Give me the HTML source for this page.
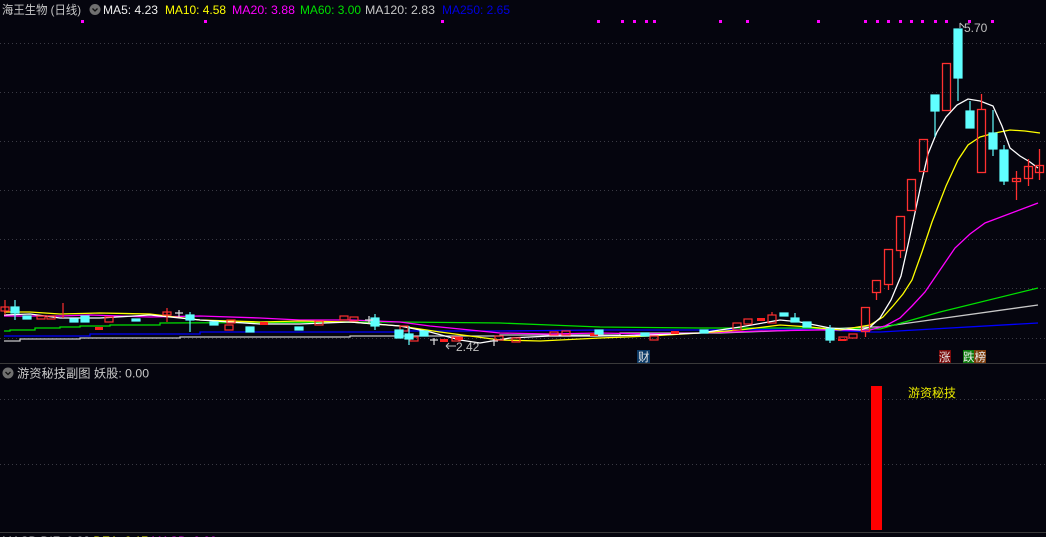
<!DOCTYPE html>
<html><head><meta charset="utf-8"><style>
html,body{margin:0;padding:0;background:#05050e;width:1046px;height:537px;overflow:hidden}
svg{display:block}
text{font-family:"Liberation Sans","Noto Sans CJK SC",sans-serif}
</style></head><body>
<svg width="1046" height="537" viewBox="0 0 1046 537" xmlns="http://www.w3.org/2000/svg">
<rect width="1046" height="537" fill="#05050e"/>
<g stroke="#3a3a44" stroke-width="1" stroke-dasharray="1,3">
<line x1="0" y1="43.5" x2="1046" y2="43.5"/><line x1="0" y1="92.5" x2="1046" y2="92.5"/>
<line x1="0" y1="141.5" x2="1046" y2="141.5"/><line x1="0" y1="190.5" x2="1046" y2="190.5"/>
<line x1="0" y1="239.5" x2="1046" y2="239.5"/><line x1="0" y1="288.5" x2="1046" y2="288.5"/>
<line x1="0" y1="338.5" x2="1046" y2="338.5"/>
<line x1="0" y1="399.5" x2="1046" y2="399.5"/><line x1="0" y1="464.5" x2="1046" y2="464.5"/>
</g>
<line x1="0" y1="363.5" x2="1046" y2="363.5" stroke="#3a3a3a"/>
<line x1="0" y1="532.5" x2="1046" y2="532.5" stroke="#3a3a3a"/>
<!-- header -->
<text x="2" y="14" font-size="12" fill="#c8c8c8" textLength="79" lengthAdjust="spacingAndGlyphs">海王生物 (日线)</text>
<circle cx="95" cy="9.5" r="5.5" fill="#707070"/><path d="M92.5 8.5l2.5 2.5 2.5-2.5" stroke="#111" stroke-width="1.3" fill="none"/>
<text x="103" y="14" font-size="12" fill="#f0f0f0" textLength="55" lengthAdjust="spacingAndGlyphs">MA5: 4.23</text>
<text x="165" y="14" font-size="12" fill="#ffff00" textLength="61" lengthAdjust="spacingAndGlyphs">MA10: 4.58</text>
<text x="232" y="14" font-size="12" fill="#ff00ff" textLength="63" lengthAdjust="spacingAndGlyphs">MA20: 3.88</text>
<text x="300" y="14" font-size="12" fill="#00e000" textLength="61" lengthAdjust="spacingAndGlyphs">MA60: 3.00</text>
<text x="365" y="14" font-size="12" fill="#c8c8c8" textLength="70" lengthAdjust="spacingAndGlyphs">MA120: 2.83</text>
<text x="442" y="14" font-size="12" fill="#0000e0" textLength="68" lengthAdjust="spacingAndGlyphs">MA250: 2.65</text>
<g fill="#ff00ff">
<rect x="81" y="20" width="3" height="3"/><rect x="204" y="20" width="3" height="3"/><rect x="441" y="20" width="3" height="3"/>
<rect x="597" y="20" width="3" height="3"/><rect x="621" y="20" width="3" height="3"/><rect x="633" y="20" width="3" height="3"/><rect x="645" y="20" width="3" height="3"/>
<rect x="653" y="20" width="3" height="3"/><rect x="719" y="20" width="3" height="3"/><rect x="746" y="20" width="3" height="3"/><rect x="817" y="20" width="3" height="3"/>
<rect x="864" y="20" width="3" height="3"/><rect x="876" y="20" width="3" height="3"/><rect x="887" y="20" width="3" height="3"/><rect x="899" y="20" width="3" height="3"/>
<rect x="910" y="20" width="3" height="3"/><rect x="921" y="20" width="3" height="3"/><rect x="934" y="20" width="3" height="3"/><rect x="945" y="20" width="3" height="3"/>
<rect x="968" y="20" width="3" height="3"/><rect x="991" y="20" width="3" height="3"/>
</g>
<g fill="none" stroke-width="1.3">
<polyline stroke="#c8c8c8" points="4,341 20,341 20,339 80,339 80,338 180,338 180,337 350,337 350,336 500,336 500,335 620,335 620,333 720,333 800,330 870,327 880,327 1038,305"/>
<polyline stroke="#0000ff" points="4,336 90,336 90,334 200,334 200,332 400,332 400,331 500,331 600,330 700,330 800,329 870,332 880,332 1038,323"/>
<polyline stroke="#00e000" points="4,331 10,331 10,330 35,330 35,328 60,328 60,327 80,327 80,326 110,326 110,325 160,325 160,323 400,322 500,323 550,325 600,327 700,328 800,328 880,329 940,312 1038,288"/>
<polyline stroke="#ff00ff" points="4,316 60,316 90,315 150,317 200,316 260,318 300,320 350,320 400,322 430,326 470,330 500,333 550,334 600,333 650,334 700,333 760,331 820,330 870,330 885,326 900,318 912,306 925,292 940,270 955,248 970,234 985,223 1038,203"/>
<polyline stroke="#ffff00" points="4,312 30,312 60,314 100,313 150,314 200,320 260,322 300,321 350,322 400,326 440,332 470,336 500,340 540,341 600,338 650,336 700,333 740,330 780,325 810,327 840,330 870,325 883,317 893,306 903,294 912,280 922,252 932,222 946,186 958,160 968,145 980,137 995,133 1010,130 1025,131 1040,133"/>
<polyline stroke="#ffffff" points="4,315 30,314 60,318 100,318 150,315 200,320 260,324 300,324 350,322 400,326 430,332 460,340 480,343 510,338 550,336 600,336 650,335 700,333 740,327 780,320 800,322 830,328 860,330 870,327 880,318 891,300 901,276 908,245 916,208 922,180 928,154 937,132 946,117 957,105 968,99 980,101 993,106 1002,126 1010,148 1020,156 1030,162 1038,168"/>
</g>
<g stroke-width="1.2">
<g stroke="#ff3030" fill="none">
<line x1="5" y1="300" x2="5" y2="315"/><rect x="1" y="307" width="8" height="4"/>
<rect x="37" y="316" width="8" height="3"/><rect x="47" y="316" width="8" height="3"/>
<line x1="63" y1="303" x2="63" y2="318"/>
<rect x="105" y="317" width="8" height="5"/>
<rect x="163" y="312" width="8" height="3"/><line x1="167" y1="308" x2="167" y2="322"/>
<rect x="227" y="320" width="8" height="3"/><rect x="315" y="321" width="8" height="4"/>
<rect x="340" y="316" width="8" height="4"/><rect x="350" y="317" width="8" height="4"/>
<rect x="225" y="325" width="8" height="5"/>
<rect x="400" y="326" width="8" height="5"/><rect x="410" y="337" width="8" height="4"/>
<rect x="452" y="337" width="8" height="4"/><rect x="495" y="336" width="8" height="4"/>
<rect x="512" y="338" width="8" height="4"/><rect x="550" y="332" width="8" height="3"/>
<rect x="562" y="331" width="8" height="4"/><rect x="650" y="336" width="8" height="4"/>
<rect x="733" y="323" width="8" height="7"/><rect x="744" y="319" width="8" height="5"/>
<rect x="768" y="315" width="8" height="8"/><line x1="772" y1="312" x2="772" y2="315"/>
<rect x="839" y="337" width="8" height="3"/><rect x="849" y="334" width="8" height="4"/>
</g>
<g fill="#ff2020" stroke="none">
<rect x="95" y="327" width="8" height="3"/><rect x="260" y="322" width="8" height="3"/>
<rect x="440" y="339" width="8" height="3"/><rect x="455" y="337" width="8" height="3"/>
<rect x="590" y="333" width="8" height="3"/><rect x="757" y="318" width="8" height="3"/>
<rect x="838" y="339" width="8" height="2"/><rect x="671" y="331" width="8" height="3"/>
</g>
<g fill="#60ffff" stroke="#60ffff">
<line x1="15" y1="300" x2="15" y2="320"/><rect x="11" y="307" width="8" height="6"/>
<rect x="23" y="316" width="8" height="3"/>
<rect x="81" y="316" width="8" height="6"/>
<rect x="70" y="319" width="8" height="3"/>
<rect x="132" y="319" width="8" height="2"/>
<line x1="190" y1="312" x2="190" y2="332"/><rect x="186" y="315" width="8" height="5"/>
<rect x="210" y="322" width="8" height="3"/>
<rect x="246" y="327" width="8" height="5"/>
<rect x="295" y="327" width="8" height="3"/>
<line x1="375" y1="314" x2="375" y2="330"/><rect x="371" y="318" width="8" height="8"/>
<rect x="395" y="330" width="8" height="8"/>
<line x1="409" y1="326" x2="409" y2="345"/><rect x="405" y="334" width="8" height="5"/>
<rect x="420" y="331" width="8" height="5"/>
<rect x="595" y="330" width="8" height="4"/><rect x="641" y="333" width="8" height="3"/>
<rect x="700" y="330" width="8" height="3"/><rect x="780" y="313" width="8" height="3"/>
<line x1="795" y1="313" x2="795" y2="322"/><rect x="791" y="318" width="8" height="4"/>
<rect x="803" y="322" width="8" height="5"/>
<line x1="830" y1="325" x2="830" y2="343"/><rect x="826" y="329" width="8" height="11"/>
</g>
<g stroke="#e0e0e0">
<line x1="175" y1="313" x2="183" y2="313"/><line x1="179" y1="310" x2="179" y2="317"/>
<line x1="430" y1="340" x2="438" y2="340"/><line x1="434" y1="338" x2="434" y2="345"/>
<line x1="490" y1="341" x2="498" y2="341"/><line x1="494" y1="339" x2="494" y2="346"/>
<line x1="365" y1="320" x2="373" y2="320"/><line x1="369" y1="316" x2="369" y2="324"/>
</g>
</g>
<g stroke="#ff3030" fill="none" stroke-width="1.3">
<rect x="861.5" y="307.5" width="8" height="24"/><line x1="865.5" y1="331" x2="865.5" y2="337"/>
<rect x="872.5" y="280.5" width="8" height="12"/><line x1="876.5" y1="292" x2="876.5" y2="300"/>
<rect x="884.5" y="249.5" width="8" height="35"/><line x1="888.5" y1="284" x2="888.5" y2="290"/>
<rect x="896.5" y="216.5" width="8" height="34"/><line x1="900.5" y1="250" x2="900.5" y2="258"/>
<rect x="907.5" y="179.5" width="8" height="31"/>
<rect x="919.5" y="139.5" width="8" height="32"/>
<rect x="942.5" y="63.5" width="8" height="47"/>
<rect x="977.5" y="109.5" width="8" height="63"/><line x1="981.5" y1="94" x2="981.5" y2="109"/>
<rect x="1012.5" y="178.5" width="8" height="3"/><line x1="1016.5" y1="171" x2="1016.5" y2="200"/>
<rect x="1024.5" y="166.5" width="8" height="12"/><line x1="1028.5" y1="159" x2="1028.5" y2="186"/>
<rect x="1035.5" y="165.5" width="8" height="7"/><line x1="1039.5" y1="149" x2="1039.5" y2="180"/>
</g>
<g fill="#60ffff" stroke="#60ffff" stroke-width="1.2">
<rect x="931" y="95" width="8" height="16"/><line x1="935" y1="111" x2="935" y2="137"/>
<rect x="954" y="29" width="8" height="49"/><line x1="958" y1="78" x2="958" y2="101"/>
<rect x="966" y="111" width="8" height="17"/><line x1="970" y1="101" x2="970" y2="111"/>
<rect x="989" y="133" width="8" height="16"/><line x1="993" y1="110" x2="993" y2="156"/>
<rect x="1000" y="150" width="8" height="31"/><line x1="1004" y1="145" x2="1004" y2="185"/>
</g>
<text x="964" y="32" font-size="12" fill="#c0c0c0">5.70</text>
<path d="M960 23v5M960 23l4 4h-1" stroke="#c0c0c0" fill="none"/>
<text x="456" y="351" font-size="12" fill="#c0c0c0">2.42</text>
<path d="M446 346h10M446 346l3-3M446 346l3 3" stroke="#c0c0c0" fill="none"/>
<rect x="637" y="350" width="13" height="13" fill="#0c3a66"/>
<text x="638" y="361" font-size="11.5" fill="#e8e8e8">财</text>
<rect x="939" y="350" width="12" height="13" fill="#7a0a0a"/>
<text x="939" y="361" font-size="11.5" fill="#e8e8e8">涨</text>
<rect x="963" y="350" width="11" height="13" fill="#0a7a0a"/>
<rect x="974" y="350" width="12" height="13" fill="#7a3a0a"/>
<text x="963" y="361" font-size="11.5" fill="#e8e8e8">跌榜</text>
<circle cx="8" cy="373" r="5.5" fill="#707070"/><path d="M5.5 372l2.5 2.5 2.5-2.5" stroke="#111" stroke-width="1.3" fill="none"/>
<text x="17" y="377.5" font-size="12" fill="#c8c8c8" textLength="132" lengthAdjust="spacingAndGlyphs">游资秘技副图  妖股: 0.00</text>
<rect x="871" y="386" width="11" height="144" fill="#ff0000"/>
<text x="908" y="397" font-size="12" fill="#e8e800">游资秘技</text>
<text x="2" y="545" font-size="12" fill="#c8c8c8">MACD  DIF: 0.23 <tspan fill="#ffff00">DEA: 0.17</tspan> <tspan fill="#ff00ff">MACD: 0.09</tspan></text>
</svg>
</body></html>
